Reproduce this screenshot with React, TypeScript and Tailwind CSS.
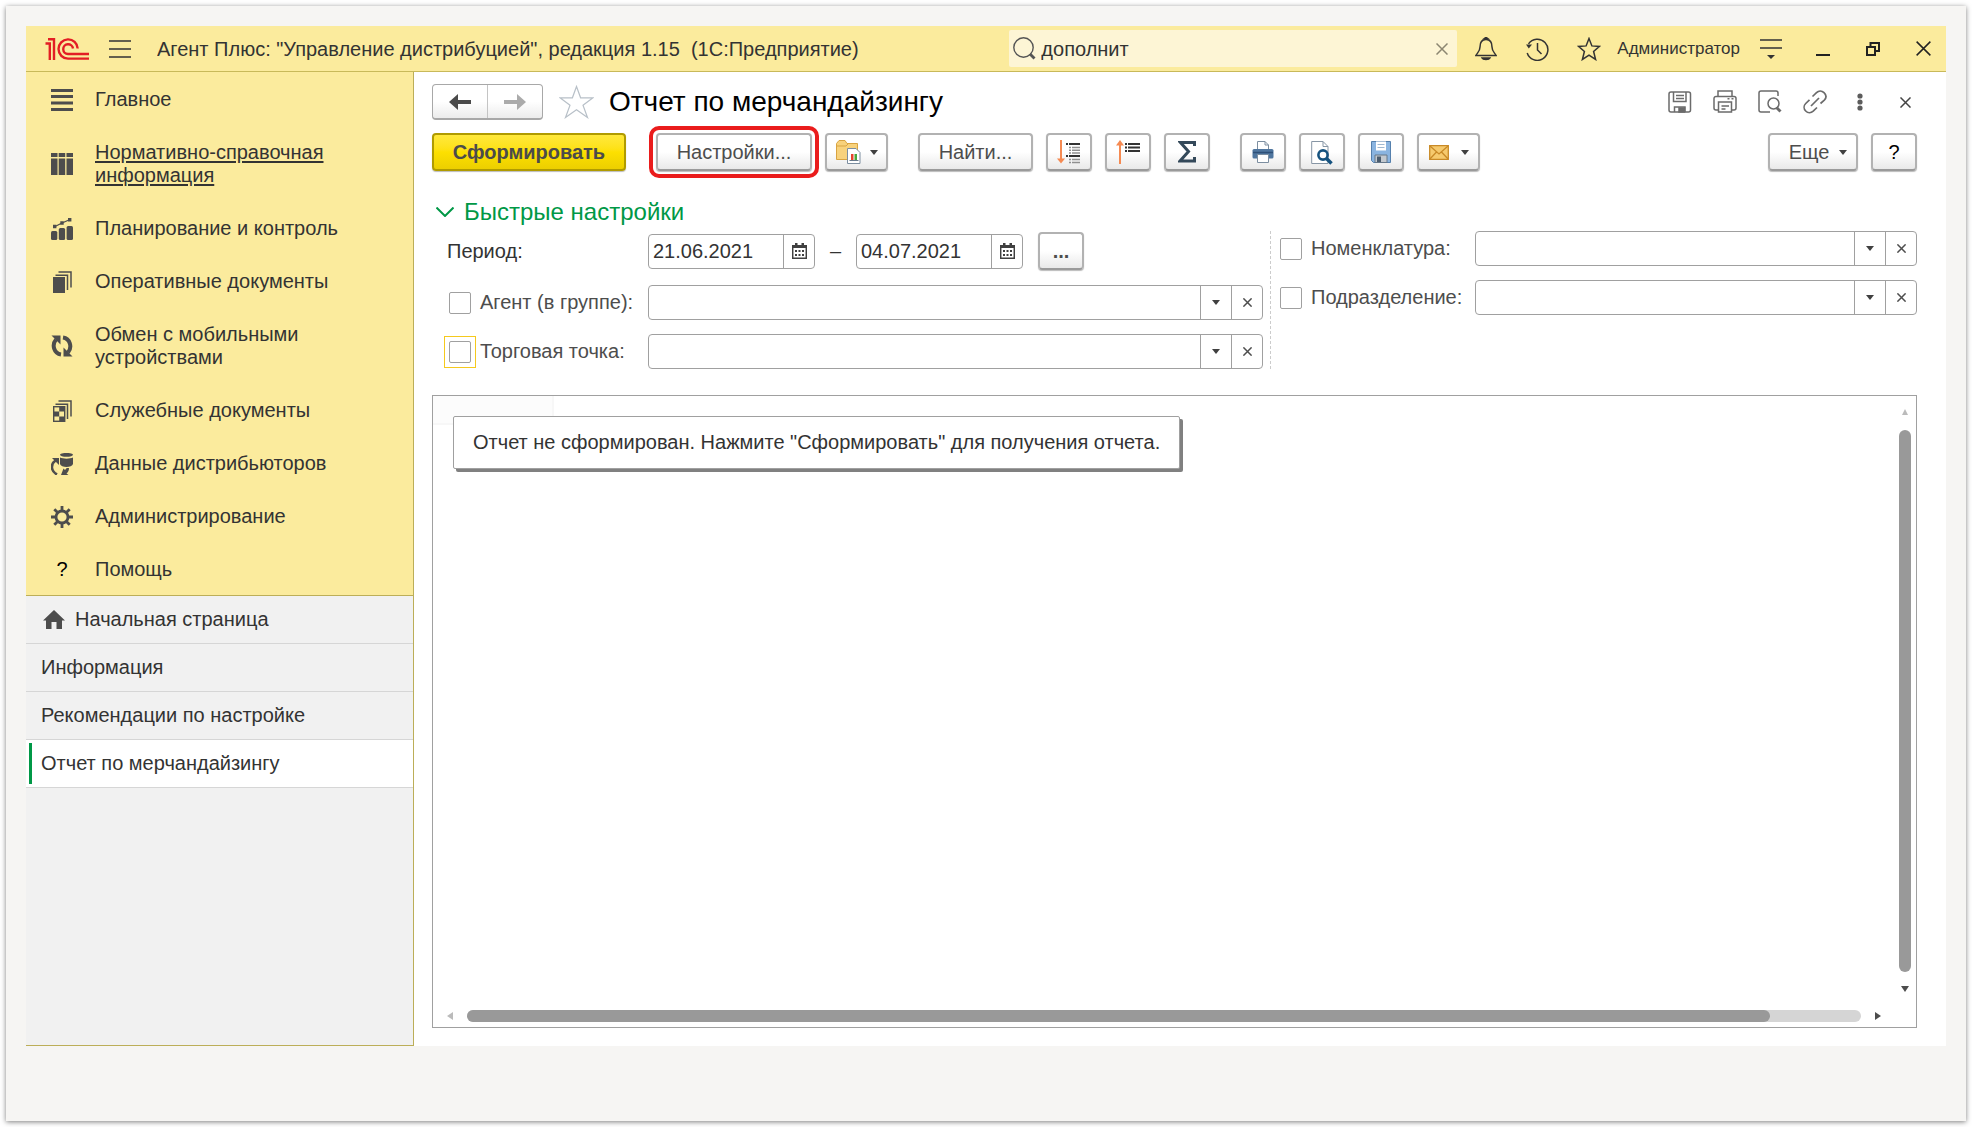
import { useState } from "react";
import type { ReactNode } from "react";
import { clsx } from "clsx";

const menuItems = [
  { name: "Главное", icon: "lines" },
  { name: "Нормативно-справочная информация", icon: "table", active: true },
  { name: "Планирование и контроль", icon: "chart" },
  { name: "Оперативные документы", icon: "docs" },
  { name: "Обмен с мобильными устройствами", icon: "sync" },
  { name: "Служебные документы", icon: "service" },
  { name: "Данные дистрибьюторов", icon: "data" },
  { name: "Администрирование", icon: "gear" },
  { name: "Помощь", icon: "help" },
];

const tabs = ["Информация", "Рекомендации по настройке", "Отчет по мерчандайзингу"];

const Logo = () => (
  <svg width="44" height="22" viewBox="0 0 44 22" fill="none" stroke="#e31e24" strokeWidth="2.400">
    <path d="M0.500 5.500H4.800V22M3 1.300H9V22" />
    <path d="M32.700 10.500A9.600 9.600 0 1 0 23 20.600H44" />
    <path d="M28 10.500A4.900 4.900 0 1 0 23 16H44" />
  </svg>
);

const MenuIcon = ({ name }: { name: string }) => {
  if (name === "help") {
    return <span className="w-[22px] shrink-0 text-center text-black">?</span>;
  }
  return (
    <svg width="22" height="22" viewBox="0 0 22 22" className="shrink-0" fill="#4d4d4d">
      {name === "lines" && <path d="M0 0h22v3H0zM0 6h22v3H0zM0 12.500h22v3H0zM0 19h22v3H0z" />}
      {name === "table" && (
        <path d="M0 0h6.500v4H0zM7.700 0h6.500v4H7.700zM15.500 0H22v4h-6.500zM0 5.500h6.500V22H0zM7.700 5.500h6.500V22H7.700zM15.500 5.500H22V22h-6.500z" />
      )}
      {name === "chart" && (
        <>
          <rect x="0" y="13" width="6.300" height="9" rx="1.500" />
          <rect x="7.800" y="10" width="6.300" height="12" rx="1.500" />
          <rect x="15.600" y="8" width="6.400" height="14" rx="1.500" />
          <path d="M4 8.500L11 5L18.500 1.800" stroke="#4d4d4d" strokeWidth="1.200" />
          <path d="M2 6.800h3.400v3.400H2zM9.300 3.300h3.400v3.400H9.300zM17 0h3.400v3.400H17z" />
        </>
      )}
      {name === "docs" && (
        <>
          <rect x="2" y="6" width="12" height="16" />
          <path d="M4.500 4.200H16.500V19M7.500 1H20V16.500" fill="none" stroke="#4d4d4d" strokeWidth="1.500" />
        </>
      )}
      {name === "service" && (
        <>
          <rect x="2.700" y="6.700" width="11" height="14.600" fill="none" stroke="#4d4d4d" strokeWidth="1.400" />
          <path d="M8.200 7h5.500v4.600H8.200zM3 11.600h5.200v4.800H3zM8.200 16.400h5.500V21H8.200z" />
          <path d="M4.500 4.200H16.500V19M7.500 1H20V16.500" fill="none" stroke="#4d4d4d" strokeWidth="1.500" />
        </>
      )}
      {name === "sync" && (
        <>
          <path d="M10 19.500C3 18.500 0.500 10 5 4.500" fill="none" stroke="#4d4d4d" strokeWidth="4" />
          <path d="M0.500 0.500H9.500V9.500z" />
          <path d="M12 2.500C19 3.500 21.500 12 17 17.500" fill="none" stroke="#4d4d4d" strokeWidth="4" />
          <path d="M21.500 21.500H12.500V12.500z" />
        </>
      )}
      {name === "data" && (
        <>
          <ellipse cx="15.500" cy="1.800" rx="6.500" ry="1.900" />
          <path d="M9 4.500c3 1.500 10 1.500 13 0v6.500c-1 4-12 4-13 0z" />
          <path d="M6 21.500C-0.500 18-0.500 11 4.500 7.500" fill="none" stroke="#4d4d4d" strokeWidth="2.600" />
          <path d="M1 5h7v7z" />
          <path d="M18 15c0 3-1 4-2.500 5.500l2 1.500H10l2.500-6.500 1.500 1.500c1-1 1.500-1.500 1.500-2z" />
        </>
      )}
      {name === "gear" && (
        <>
          <circle cx="11" cy="11" r="6" fill="none" stroke="#4d4d4d" strokeWidth="2.800" />
          <path
            d="M11 0v5M11 17v5M0 11h5M17 11h5M3.300 3.300l3.300 3.300M15.400 15.400l3.300 3.300M3.300 18.700l3.300-3.300M15.400 6.600l3.300-3.300"
            stroke="#4d4d4d"
            strokeWidth="2.800"
          />
        </>
      )}
    </svg>
  );
};

const Cross = ({ size, color, width = 1.5 }: { size: number; color: string; width?: number }) => (
  <svg width={size} height={size} viewBox="0 0 12 12" stroke={color} strokeWidth={(width * 12) / size}>
    <path d="M0.500 0.500L11.500 11.500M11.500 0.500L0.500 11.500" />
  </svg>
);

const Caret = () => (
  <svg width="8" height="5" viewBox="0 0 8 5" fill="#404040">
    <path d="M0 0H8L4 5z" />
  </svg>
);

const CalendarIcon = () => (
  <svg width="15" height="16" viewBox="0 0 15 16">
    <path d="M0.700 2.700h13.600v12.600H0.700z" fill="#fff" stroke="#404040" strokeWidth="1.500" />
    <path d="M0 2h15v3H0zM3 0h2.500v4H3zM9.500 0H12v4H9.500z" fill="#404040" />
    <path d="M3 7h2v2H3zM6.500 7h2v2h-2zM10 7h2v2h-2zM3 11h2v2H3zM6.500 11h2v2h-2zM10 11h2v2h-2z" fill="#404040" />
  </svg>
);

interface ToolButtonProps {
  label: string;
  className?: string;
  children: ReactNode;
}

const ToolButton = ({ label, className, children }: ToolButtonProps) => (
  <button
    aria-label={label}
    className={clsx(
      "flex h-[38px] shrink-0 items-center justify-center rounded-sm border-2 border-[#b2b2b2] border-b-[#9a9a9a] bg-linear-to-b from-white from-50% to-[#e9e9e9] text-[#4d4d4d] shadow-[0_1px_1px_#bbb]",
      className
    )}
  >
    {children}
  </button>
);

const Checkbox = ({ id, focused }: { id: string; focused?: boolean }) => (
  <span className={clsx("flex shrink-0 border p-1", focused ? "border-[#f5c91e]" : "border-transparent")}>
    <input
      id={id}
      type="checkbox"
      className="size-[22px] appearance-none rounded-xs border border-[#a0a0a0] bg-white checked:bg-[#009846]"
    />
  </span>
);

const ComboField = ({ label }: { label: string }) => {
  const [value, setValue] = useState("");
  return (
    <div className="flex h-[35px] min-w-0 flex-1 rounded-sm border border-[#a0a0a0] bg-white">
      <input
        aria-label={label}
        value={value}
        onChange={(e) => setValue(e.target.value)}
        className="min-w-0 flex-1 px-1 outline-none"
      />
      <button aria-label="Выбрать" className="flex w-[31px] items-center justify-center border-l border-[#a0a0a0]">
        <Caret />
      </button>
      <button
        aria-label="Очистить"
        onClick={() => setValue("")}
        className="flex w-[31px] items-center justify-center border-l border-[#a0a0a0]"
      >
        <Cross size={9} color="#4d4d4d" />
      </button>
    </div>
  );
};

const DateField = ({ label, date }: { label: string; date: string }) => (
  <div className="flex h-[35px] w-[167px] rounded-sm border border-[#a0a0a0] bg-white">
    <input aria-label={label} defaultValue={date} className="min-w-0 flex-1 pl-1 outline-none" />
    <button aria-label="Календарь" className="flex w-[31px] items-center justify-center border-l border-[#a0a0a0]">
      <CalendarIcon />
    </button>
  </div>
);

const Header = () => (
  <header className="flex h-[46px] items-center border-b border-[#c8b95a] bg-[#fbeb9d] pl-[19px]">
    <Logo />
    <button aria-label="Меню" className="ml-5">
      <svg width="22" height="18" viewBox="0 0 22 18" stroke="#333" strokeWidth="1.500">
        <path d="M0 1h22M0 9h22M0 17h22" />
      </svg>
    </button>
    <h1 className="ml-[26px] flex-1 truncate pt-0.5 whitespace-pre">
      {'Агент Плюс: "Управление дистрибуцией", редакция 1.15  (1С:Предприятие)'}
    </h1>
    <div className="flex h-[37px] w-[448px] items-center rounded-xs bg-[#fdf5d5] pl-1 pr-[9px]">
      <svg width="23" height="23" viewBox="0 0 23 23" fill="none" stroke="#555">
        <circle cx="10.500" cy="10.500" r="9.700" strokeWidth="1.400" />
        <path d="M17 17L21.500 21.500" strokeWidth="2.800" />
      </svg>
      <input aria-label="Поиск" defaultValue="дополнит" className="min-w-0 flex-1 pt-0.5 pl-[5px] outline-none" />
      <button aria-label="Очистить поиск">
        <Cross size={12} color="#8c8671" />
      </button>
    </div>
    <div className="flex items-center gap-7 pl-[18px]">
      <button aria-label="Уведомления">
        <svg width="22" height="24" viewBox="0 0 22 24" fill="none" stroke="#333" strokeWidth="1.500">
          <path d="M11 2.500C6.500 2.500 5 6 5 10C5 14.500 2.500 15.500 0.800 18.500H21.200C19.500 15.500 17 14.500 17 10C17 6 15.500 2.500 11 2.500z" />
          <path d="M9 1.800L11 0.300L13 1.800zM7 21h8c-1 2-7 2-8 0z" fill="#333" />
        </svg>
      </button>
      <button aria-label="История">
        <svg width="24" height="24" viewBox="0 0 24 24" fill="none" stroke="#333" strokeWidth="1.500">
          <path d="M3.500 6.800A10.600 10.600 0 1 1 2.200 16" />
          <path d="M12.500 6v7l4 4" />
          <path d="M1 7.500h6L3.800 11.500z" fill="#333" stroke="none" />
        </svg>
      </button>
      <button aria-label="Избранное">
        <svg width="24" height="24" viewBox="0 0 24 24" fill="none" stroke="#333" strokeWidth="1.500">
          <path d="M12 1.500L14.900 8.900L22.500 9.400L16.600 14.400L18.600 22.500L12 18.200L5.400 22.500L7.400 14.400L1.500 9.400L9.100 8.900z" />
        </svg>
      </button>
    </div>
    <a href="#user" className="ml-4 text-[17px] leading-5">Администратор</a>
    <button aria-label="Сервис" className="ml-5">
      <svg width="22" height="20" viewBox="0 0 22 20" stroke="#333" strokeWidth="1.500">
        <path d="M0 1h22M0 9h22" />
        <path d="M7 16h8l-4 4z" fill="#333" stroke="none" />
      </svg>
    </button>
    <div className="flex items-center gap-9 pr-[15px] pl-[34px]">
      <button aria-label="Свернуть">
        <svg width="14" height="14" viewBox="0 0 14 14" fill="#222">
          <path d="M0 12h14v2H0z" />
        </svg>
      </button>
      <button aria-label="Восстановить">
        <svg width="14" height="14" viewBox="0 0 14 14" fill="none" stroke="#222" strokeWidth="2">
          <path d="M1 5h8v8H1zM4.500 4V1H13V9H10" />
        </svg>
      </button>
      <button aria-label="Закрыть">
        <Cross size={15} color="#222" />
      </button>
    </div>
  </header>
);

const Sidebar = () => (
  <aside className="flex w-[388px] shrink-0 flex-col border-r border-b border-[#bcae58] bg-[#f1f1f1]">
    <nav className="border-b border-[#bcae58] bg-[#fbeb9d]">
      {menuItems.map((item) => (
        <a key={item.name} href="#section" className="flex items-center gap-[22px] pt-4 pr-10 pb-[14px] pl-[25px]">
          <MenuIcon name={item.icon} />
          <span className={clsx(item.active && "underline underline-offset-2")}>{item.name}</span>
        </a>
      ))}
    </nav>
    <nav>
      <a href="#home" className="flex h-12 items-center gap-2.5 border-b border-[#d6d6d6] pl-[17px]">
        <svg width="22" height="19" viewBox="0 0 22 19" fill="#4d4d4d">
          <path d="M11 0L22 10.500H19V19H13.500V12H8.500V19H3V10.500H0z" />
        </svg>
        Начальная страница
      </a>
      {tabs.map((tab, i) => (
        <a
          key={tab}
          href="#tab"
          className={clsx("flex h-12 items-center border-b border-[#d6d6d6] pl-[3px]", i === 2 && "bg-white")}
        >
          <span className={clsx("mr-[9px] h-[41px] w-[3px]", i === 2 && "bg-[#009846]")} />
          {tab}
        </a>
      ))}
    </nav>
  </aside>
);

const TitleBar = () => (
  <div className="flex items-center">
    <div className="flex h-9 rounded-sm border border-b-2 border-[#a8a8a8] bg-linear-to-b from-white from-50% to-[#ececec]">
      <button aria-label="Назад" className="flex w-[55px] items-center justify-center border-r border-[#c4c4c4]">
        <svg width="22" height="16" viewBox="0 0 22 16" fill="#4a4a4a">
          <path d="M0 8L9 0V6H22V10H9V16z" />
        </svg>
      </button>
      <button aria-label="Вперед" className="flex w-[54px] items-center justify-center">
        <svg width="22" height="16" viewBox="0 0 22 16" fill="#ababab">
          <path d="M22 8L13 0V6H0V10H13V16z" />
        </svg>
      </button>
    </div>
    <button aria-label="В избранное" className="ml-4">
      <svg width="35" height="34" viewBox="0 0 35 34" fill="none" stroke="#b8c0c8" strokeWidth="1.200">
        <path d="M17.500 1.500L21.600 12.800H34L24 20.200L28.500 32.500L17.500 24.800L6.500 32.500L11 20.200L1 12.800H13.400z" />
      </svg>
    </button>
    <h2 className="ml-[15px] flex-1 text-[28px] leading-8 text-black">Отчет по мерчандайзингу</h2>
    <div className="flex items-center gap-[21px]">
      <button aria-label="Сохранить">
        <svg width="24" height="24" viewBox="0 0 24 24" fill="none" stroke="#6b6b6b" strokeWidth="1.500">
          <rect x="1" y="2" width="21.500" height="20" rx="2" />
          <path d="M5.500 2v9.500h12.500V2M8 5.500h8M8 8.500h8M6.500 22v-5h10.500v5" />
          <path d="M11 18h5.500v4H11z" fill="#6b6b6b" />
        </svg>
      </button>
      <button aria-label="Печать">
        <svg width="24" height="24" viewBox="0 0 24 24" fill="none" stroke="#6b6b6b" strokeWidth="1.500">
          <path d="M5 6V1h14v5M5.500 20H3a2 2 0 0 1-2-2V8.500a2 2 0 0 1 2-2h18a2 2 0 0 1 2 2V18a2 2 0 0 1-2 2h-2.500" />
          <path d="M5.500 12h13v10h-13zM8.500 16h7.500M8.500 19h4M14.500 8.800h2M18.500 8.800h2" />
        </svg>
      </button>
      <button aria-label="Просмотр">
        <svg width="24" height="24" viewBox="0 0 24 24" fill="none" stroke="#6b6b6b" strokeWidth="1.500">
          <path d="M20 6V3a2 2 0 0 0-2-2H3a2 2 0 0 0-2 2v17a2 2 0 0 0 2 2h9" />
          <circle cx="15.500" cy="13.500" r="5.500" />
          <path d="M18.500 17.500L22.500 21.500" strokeWidth="3" />
        </svg>
      </button>
      <button aria-label="Ссылка">
        <svg width="24" height="24" viewBox="0 0 24 24" fill="none" stroke="#6b6b6b" strokeWidth="1.700">
          <path d="M9.500 6.500L13.500 2.700C15.500 0.800 18.800 0.600 21 2.700C23.400 5 23.400 8 21.300 10.200L17.500 13.500" />
          <path d="M6.500 9.800L2.700 13.500C0.600 15.600 0.600 18.900 2.700 21C4.900 23.200 8 23.200 10.200 21.200L14 17.500" />
          <path d="M8 16L16 8" />
        </svg>
      </button>
      <button aria-label="Еще действия" className="flex w-6 justify-center">
        <svg width="6" height="18" viewBox="0 0 6 18" fill="#5c5c5c">
          <circle cx="3" cy="3" r="2.600" />
          <circle cx="3" cy="9" r="2.600" />
          <circle cx="3" cy="15" r="2.600" />
        </svg>
      </button>
      <button aria-label="Закрыть форму" className="flex w-6 justify-center">
        <Cross size={11} color="#444" />
      </button>
    </div>
  </div>
);

const CommandBar = () => (
  <div className="mt-[13px] flex items-center gap-[13px]">
    <button className="h-[38px] w-[194px] shrink-0 rounded-sm border-2 border-[#b09b00] bg-linear-to-b from-[#ffe83a] via-[#fde000] to-[#eccf00] font-bold text-[#4b4b4b] shadow-[0_1px_1px_#bbb]">
      Сформировать
    </button>
    <div className="relative ml-[17px] flex">
      <ToolButton label="Настройки" className="w-[156px]">Настройки...</ToolButton>
      <span className="pointer-events-none absolute -inset-[7px] rounded-[10px] border-4 border-[#ea1c1c]" />
    </div>
    <ToolButton label="Варианты отчета" className="w-[63px] gap-[9px]">
      <svg width="25" height="24" viewBox="0 0 25 24">
        <path d="M0.500 19.500V3.500L3 0.500H9L11 3.500H21.500V19.500z" fill="#f8d27c" stroke="#d9a441" />
        <path d="M1 6H10L12 4" fill="none" stroke="#d9a441" />
        <path d="M11.500 8.500H20L24 12.500V23.500H11.500z" fill="#fff" stroke="#7c8ea0" />
        <path d="M15 14h2.500v6H15z" fill="#e8432e" />
        <path d="M18.500 14H21v6h-2.500z" fill="#4aa83c" />
        <path d="M13.500 20.500h9" stroke="#66788a" />
      </svg>
      <Caret />
    </ToolButton>
    <ToolButton label="Найти" className="ml-[17px] w-[115px]">Найти...</ToolButton>
    <ToolButton label="Развернуть группы" className="w-[46px]">
      <svg width="24" height="24" viewBox="0 0 24 24">
        <path d="M4 0v20" stroke="#f58a52" strokeWidth="2" />
        <path d="M0 18.500h8L4 23.500z" fill="#f58a52" />
        <path d="M9 4h2M12 4h11M9 16h2M12 16h11" stroke="#333" strokeWidth="2" />
        <path d="M12 7.500h2M15 7.500h8M12 10.300h2M15 10.300h8M12 13h2M15 13h8M12 19.500h2M15 19.500h8M12 22.500h2M15 22.500h8" stroke="#909090" strokeWidth="1.600" />
      </svg>
    </ToolButton>
    <ToolButton label="Свернуть группы" className="w-[46px]">
      <svg width="24" height="24" viewBox="0 0 24 24">
        <path d="M4 4v20" stroke="#f58a52" strokeWidth="2" />
        <path d="M0 5.500h8L4 0z" fill="#f58a52" />
        <path d="M9 4h2M12 4h12M9 7.500h2M12 7.500h12M9 11h2M12 11h12" stroke="#333" strokeWidth="1.800" />
      </svg>
    </ToolButton>
    <ToolButton label="Сумма" className="w-[46px]">
      <svg width="18" height="22" viewBox="0 0 18 22" fill="none" stroke="#34495a" strokeWidth="3">
        <path d="M16.500 5V1.500H2.500L10.500 10.500L2 20H16.500V16" />
      </svg>
    </ToolButton>
    <ToolButton label="Печать" className="ml-[17px] w-[46px]">
      <svg width="22" height="24" viewBox="0 0 22 24">
        <path d="M5.500 10V1.500H13L16.500 5V10" fill="#fff" stroke="#7c8ea0" />
        <path d="M13 1.500V5H16.500" fill="none" stroke="#7c8ea0" />
        <rect x="0.500" y="9" width="21" height="9.500" rx="1.500" fill="#4f769f" />
        <path d="M1 12.500h20" stroke="#2f5078" strokeWidth="1.500" />
        <path d="M5.500 14.500h11v8h-11z" fill="#fff" stroke="#7c8ea0" />
      </svg>
    </ToolButton>
    <ToolButton label="Предварительный просмотр" className="w-[46px]">
      <svg width="22" height="25" viewBox="0 0 22 25" fill="none">
        <path d="M0.700 1.500H12L17 6.500V23.500H0.700z" fill="#fff" stroke="#8796a5" />
        <path d="M12 1.500V6.500H17" stroke="#8796a5" />
        <circle cx="12" cy="15" r="4.600" fill="#fff" stroke="#15527f" strokeWidth="2.600" />
        <path d="M15.500 18.500L20.500 23.500" stroke="#15527f" strokeWidth="3.500" />
      </svg>
    </ToolButton>
    <ToolButton label="Сохранить отчет" className="w-[46px]">
      <svg width="20" height="22" viewBox="0 0 20 22">
        <path d="M0.500 0.500h19v21h-17l-2-2z" fill="#8ab4e0" stroke="#5580ad" />
        <path d="M5 0.500h10v9H5z" fill="#fff" />
        <path d="M6.500 3.500h7M6.500 6.500h7" stroke="#a0b8d0" />
        <path d="M4 14h12v7.500H4z" fill="#c3c9cf" stroke="#66788a" />
        <path d="M6 15.500h4v5.500H6z" fill="#4b5c6e" />
      </svg>
    </ToolButton>
    <ToolButton label="Отправить" className="w-[63px] gap-3">
      <svg width="20" height="15" viewBox="0 0 20 15" fill="#f6ca6e" stroke="#c98a27" strokeWidth="1.300">
        <path d="M0.700 0.700h18.600v13.600H0.700z" />
        <path d="M0.700 0.700L10 9L19.300 0.700M0.700 14.300L7.500 7M19.300 14.300L12.500 7" fill="none" />
      </svg>
      <Caret />
    </ToolButton>
    <ToolButton label="Еще" className="ml-auto w-[90px] gap-2.5 pl-2.5">
      Еще
      <Caret />
    </ToolButton>
    <ToolButton label="Справка" className="w-[46px]">
      <span className="text-black">?</span>
    </ToolButton>
  </div>
);

const QuickSettings = () => (
  <section>
    <button className="mt-[27px] flex items-center gap-2.5 pl-1 text-[24px] leading-7 text-[#009846]">
      <svg width="18" height="10" viewBox="0 0 18 10" fill="none" stroke="#009846" strokeWidth="2">
        <path d="M0.500 0.500L9 9L17.500 0.500" />
      </svg>
      Быстрые настройки
    </button>
    <div className="mt-[5px] grid grid-cols-[839fr_646fr]">
      <div className="flex flex-col gap-3.5 border-r border-dashed border-[#ccc] pr-[7px]">
        <div className="flex h-10 items-center">
          <span className="w-[216px] shrink-0 pl-[15px]">Период:</span>
          <DateField label="Начало периода" date="21.06.2021" />
          <span className="w-[41px] text-center">–</span>
          <DateField label="Конец периода" date="04.07.2021" />
          <ToolButton label="Выбрать период" className="ml-[15px] w-[46px]">
            <span className="font-bold">...</span>
          </ToolButton>
        </div>
        <div className="flex h-[35px] items-center">
          <div className="flex w-[216px] shrink-0 items-center pl-3 text-[#4d4d4d]">
            <Checkbox id="use-agent" />
            <label htmlFor="use-agent" className="pl-1 whitespace-nowrap">Агент (в группе):</label>
          </div>
          <ComboField label="Агент" />
        </div>
        <div className="flex h-[35px] items-center">
          <div className="flex w-[216px] shrink-0 items-center pl-3 text-[#4d4d4d]">
            <Checkbox id="use-point" focused />
            <label htmlFor="use-point" className="pl-1 whitespace-nowrap">Торговая точка:</label>
          </div>
          <ComboField label="Торговая точка" />
        </div>
      </div>
      <div className="flex flex-col gap-3.5 pl-1">
        <div className="flex h-[35px] items-center">
          <div className="flex w-[200px] shrink-0 items-center text-[#4d4d4d]">
            <Checkbox id="use-item" />
            <label htmlFor="use-item" className="pl-1">Номенклатура:</label>
          </div>
          <ComboField label="Номенклатура" />
        </div>
        <div className="flex h-[35px] items-center">
          <div className="flex w-[200px] shrink-0 items-center text-[#4d4d4d]">
            <Checkbox id="use-dept" />
            <label htmlFor="use-dept" className="pl-1">Подразделение:</label>
          </div>
          <ComboField label="Подразделение" />
        </div>
      </div>
    </div>
  </section>
);

const ReportArea = () => (
  <section className="mt-[26px] flex flex-1 flex-col border border-[#a0a0a0] bg-white">
    <div className="flex flex-1">
      <div className="flex-1">
        <div className="h-[29px] w-[121px] border-r-2 border-b-2 border-[#f7f7f7] bg-[#fcfcfc]" />
        <div className="relative -mt-[9px] ml-5 w-fit rounded-xs border border-[#a0a0a0] bg-white px-[19px] py-[14px] shadow-[3px_3px_0_#808080]">
          Отчет не сформирован. Нажмите "Сформировать" для получения отчета.
        </div>
      </div>
      <div className="mr-[5px] flex w-3 flex-col items-center pt-[13px]">
        <svg width="6" height="6" viewBox="0 0 6 6" fill="#bbb">
          <path d="M3 0L6 6H0z" />
        </svg>
        <div className="mt-[15px] w-3 flex-1 rounded-full bg-[#999]" />
        <svg width="8" height="6" viewBox="0 0 8 6" fill="#4d4d4d" className="mt-3.5">
          <path d="M0 0H8L4 6z" />
        </svg>
      </div>
    </div>
    <div className="mt-[18px] mb-[5px] flex h-3 items-center pr-[35px] pl-3.5">
      <svg width="6" height="8" viewBox="0 0 6 8" fill="#bbb">
        <path d="M6 0V8L0 4z" />
      </svg>
      <div className="ml-3.5 h-3 flex-1 rounded-full bg-[#d5d5d5]">
        <div className="h-3 w-[93.5%] rounded-full bg-[#999]" />
      </div>
      <svg width="6" height="8" viewBox="0 0 6 8" fill="#4d4d4d" className="ml-3.5">
        <path d="M0 0V8L6 4z" />
      </svg>
    </div>
  </section>
);

const App = () => {
  return (
    <div className="flex min-h-screen bg-white p-1.5 font-['Liberation_Sans',Arial,sans-serif] text-[20px] leading-[23px] text-[#333]">
      <div className="flex flex-1 flex-col bg-[#f6f5f3] px-5 pt-5 pb-[75px] shadow-[0_1px_5px_rgba(0,0,0,0.5)]">
        <div className="flex flex-1 flex-col bg-white">
          <Header />
          <div className="flex flex-1">
            <Sidebar />
            <main className="flex min-w-0 flex-1 flex-col pt-3 pr-[29px] pb-[18px] pl-[18px]">
              <TitleBar />
              <CommandBar />
              <QuickSettings />
              <ReportArea />
            </main>
          </div>
        </div>
      </div>
    </div>
  );
};

export default App;
